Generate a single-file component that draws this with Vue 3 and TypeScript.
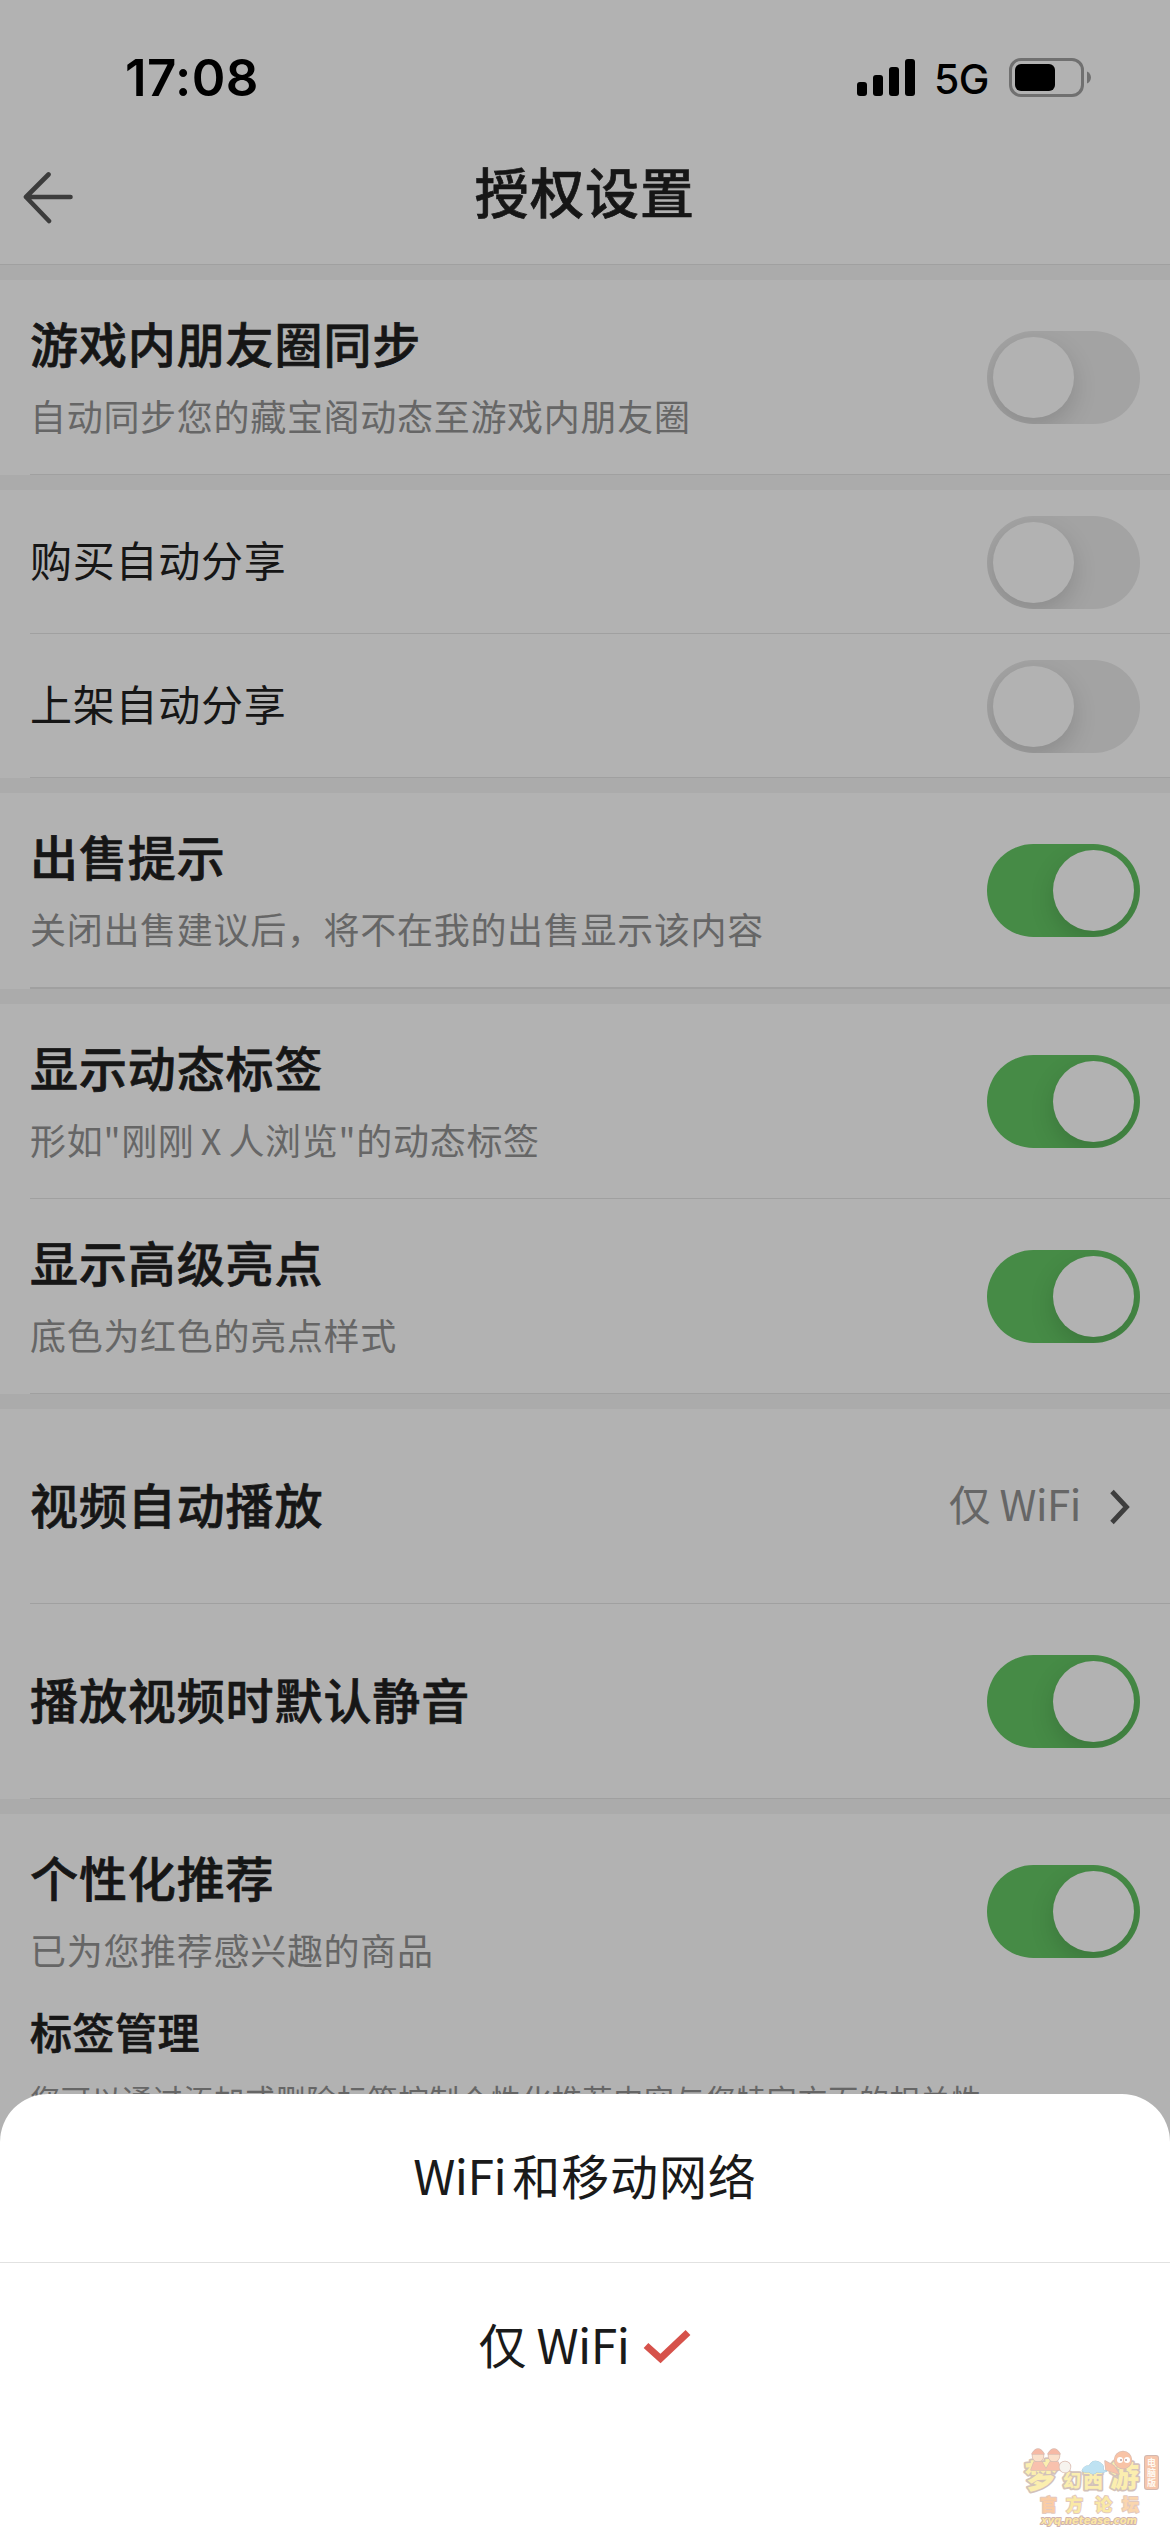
<script setup lang="ts">
interface Row {
  title: string
  sub?: string
  plain?: boolean
  on?: boolean
  value?: string
}

const sections: Row[][] = [
  [{ title: '游戏内朋友圈同步', sub: '自动同步您的藏宝阁动态至游戏内朋友圈', on: false }],
  [
    { title: '购买自动分享', plain: true, on: false },
    { title: '上架自动分享', plain: true, on: false },
  ],
  [{ title: '出售提示', sub: '关闭出售建议后，将不在我的出售显示该内容', on: true }],
  [
    { title: '显示动态标签', sub: '形如"刚刚 X 人浏览"的动态标签', on: true },
    { title: '显示高级亮点', sub: '底色为红色的亮点样式', on: true },
  ],
  [
    { title: '视频自动播放', value: '仅 WiFi' },
    { title: '播放视频时默认静音', on: true },
  ],
  [{ title: '个性化推荐', sub: '已为您推荐感兴趣的商品', on: true }],
]
</script>

<template>
  <div class="screen">
    <div class="status">
      <span class="time">17:08</span>
      <div class="status-right">
        <svg class="signal" width="58" height="38" viewBox="0 0 58 38">
          <rect x="0" y="23" width="10" height="14" rx="3" />
          <rect x="16" y="16" width="10" height="21" rx="3" />
          <rect x="32" y="8" width="10" height="29" rx="3" />
          <rect x="48" y="0" width="10" height="37" rx="3" />
        </svg>
        <span class="net">5G</span>
        <svg class="battery" width="82" height="39" viewBox="0 0 82 39">
          <rect x="1.500" y="1.500" width="72" height="36" rx="10.500" fill="none" stroke="#707070" stroke-width="3" />
          <rect x="6" y="6" width="40" height="27" rx="6" fill="#000" />
          <path d="M78 13.500c5.300 2 5.300 10 0 12z" fill="#707070" />
        </svg>
      </div>
    </div>
    <header class="nav">
      <svg class="back" width="52" height="54" viewBox="0 0 52 54" fill="none" stroke="#3c3c3c" stroke-width="4.600" stroke-linecap="round" stroke-linejoin="round">
        <path d="M25.500 4.500 3 27l23 24M3 27h44.500" />
      </svg>
      <h1>授权设置</h1>
    </header>

    <section v-for="(rows, i) in sections" :key="i" class="group" :class="'g' + i">
      <div v-for="row in rows" :key="row.title" class="row" :class="{ plain: row.plain, single: !row.sub }">
        <div class="texts">
          <div class="title">{{ row.title }}</div>
          <div v-if="row.sub" class="sub">{{ row.sub }}</div>
        </div>
        <div v-if="row.value" class="value">
          <span>{{ row.value }}</span>
          <svg width="22" height="36" viewBox="0 0 22 36" fill="none" stroke="#3e3e3e" stroke-width="4.800">
            <path d="M3 2.500 17.500 18 3 33.500" />
          </svg>
        </div>
        <div v-else class="toggle" :class="{ on: row.on }"><i></i></div>
      </div>
      <div v-if="i === sections.length - 1" class="tags">
        <div class="tags-title">标签管理</div>
        <div class="tags-sub">您可以通过添加或删除标签控制个性化推荐内容与您特定方面的相关性</div>
      </div>
    </section>

    <div class="sheet">
      <div class="option first"><span><b class="latin">WiFi</b>和移动网络</span></div>
      <div class="option">
        <span>仅<b class="latin after">WiFi</b></span>
        <svg width="48" height="36" viewBox="0 0 48 36" fill="none" stroke="#d6524b" stroke-width="7">
          <path d="M3 16.500 17.500 29.500 45 3.500" />
        </svg>
      </div>
      <svg class="mark" width="140" height="84" viewBox="0 0 140 84">
        <g stroke-linejoin="round" paint-order="stroke">
          <g font-family="Noto Sans CJK SC" font-weight="900" fill="#fbeb9c" stroke="#c9b4a8" stroke-width="3.500">
            <text x="5" y="40" font-size="33" transform="rotate(-4 20 30)">梦</text>
            <text x="43" y="39" font-size="18">幻</text>
            <text x="63" y="40" font-size="20">西</text>
            <text x="90" y="39" font-size="29">游</text>
          </g>
          <g stroke="#d3ada0" stroke-width="1.500">
            <circle cx="18" cy="8" r="5.500" fill="#fbd9bd" />
            <circle cx="34" cy="8" r="5.500" fill="#fbd9bd" />
            <path d="M12 6q6-10 12 0zM28 6q6-10 12 0z" fill="#f5a88f" />
            <path d="M11 22l3-8h8l4 7 4-7h8l3 8z" fill="#f7b299" />
            <circle cx="45" cy="19" r="5.500" fill="#f5f1ea" />
            <path d="M85 13l9 5 5 8-13-4z" fill="#f7b494" />
            <circle cx="103" cy="12" r="8.500" fill="#f7b590" />
          </g>
          <circle cx="100" cy="12" r="3" fill="#fff" /><circle cx="107" cy="12" r="3" fill="#fff" />
          <circle cx="101" cy="12" r="1" fill="#a88" /><circle cx="106" cy="12" r="1" fill="#a88" />
          <path d="M62 23q2-6 7-5 3-7 10-4 6 3 4 8l4 1q-4 3-10 1-4 4-8 0-4 1-7-1z" fill="#aedcf0" stroke="#94bdd0" stroke-width="1" />
          <rect x="125" y="8" width="13" height="33" rx="2" fill="#f5b898" stroke="#c9a79c" stroke-width="2" />
          <g font-family="Noto Sans CJK SC" font-weight="700" font-size="9" fill="#fffaf0">
            <text x="127" y="18">电</text>
            <text x="127" y="28">脑</text>
            <text x="127" y="38">版</text>
          </g>
          <g font-family="Noto Sans CJK SC" font-weight="900" font-size="17" stroke="#dcbcae" stroke-width="2">
            <text x="20" y="62.500" fill="#f9c08f">官</text>
            <text x="46" y="62.500" fill="#fae48f">方</text>
            <text x="75" y="62.500" fill="#fae48f">论</text>
            <text x="102" y="62.500" fill="#f9cc9a">坛</text>
          </g>
          <text x="21" y="75.500" textLength="96" lengthAdjust="spacingAndGlyphs" font-family="DejaVu Sans" font-style="italic" font-weight="700" font-size="10" fill="#fbe08e" stroke="#c5a09a" stroke-width="1.800">xyq.netease.com</text>
        </g>
      </svg>
    </div>
  </div>
</template>

<style>
body {
  margin: 0;
}
</style>

<style scoped>
.screen {
  position: relative;
  width: 1170px;
  height: 2532px;
  overflow: hidden;
  background: #b2b2b2;
  color: #161616;
  font-family: "Noto Sans CJK SC", sans-serif;
}
.status {
  height: 140px;
  box-sizing: border-box;
  padding: 48px 79px 0 125px;
  display: flex;
  justify-content: space-between;
  align-items: flex-start;
  color: #000;
  font-family: Inter, sans-serif;
}
.time {
  font-size: 51px;
  font-weight: 600;
  line-height: 60px;
  letter-spacing: 0.4px;
}
.status-right {
  display: flex;
  align-items: flex-start;
}
.signal {
  margin-top: 11px;
}
.net {
  margin: 6px 21px 0 19px;
  width: 54px;
  font-size: 41px;
  font-weight: 500;
  line-height: 50px;
  letter-spacing: -0.5px;
}
.battery {
  margin-top: 10px;
}
.nav {
  height: 125px;
  box-sizing: border-box;
  border-bottom: 1px solid #a0a0a0;
  display: flex;
  padding-left: 23px;
}
.back {
  margin-top: 30px;
}
h1 {
  flex: 1;
  margin: 11px 75px 0 0;
  text-align: center;
  font-size: 54px;
  font-weight: 500;
  line-height: 80px;
  letter-spacing: 1.1px;
  -webkit-text-stroke: 0.7px currentColor;
}
.group {
  border-top: 15px solid #ababab;
}
.row {
  position: relative;
  height: 195px;
  display: flex;
  justify-content: space-between;
  align-items: center;
  padding: 0 30px;
}
.row::after {
  content: "";
  position: absolute;
  left: 30px;
  right: 0;
  bottom: 0;
  height: 1px;
  background: #a0a0a0;
}
.g2 .row {
  padding-bottom: 1px;
}
.g2 .row::after {
  height: 2px;
}
.g5 .row::after {
  display: none;
}
.row.plain {
  height: 144px;
}
.texts {
  align-self: flex-start;
  padding-top: 28px;
}
.title {
  font-size: 48px;
  font-weight: 500;
  line-height: 68px;
  letter-spacing: 0.9px;
  -webkit-text-stroke: 0.7px currentColor;
}
.plain .title {
  font-size: 42px;
  font-weight: 400;
  letter-spacing: 0.75px;
  -webkit-text-stroke: 0;
}
.single .texts {
  align-self: center;
  padding: 0 0 7px;
}
.sub {
  margin-top: 14px;
  font-size: 36px;
  line-height: 50px;
  letter-spacing: 0.7px;
  word-spacing: -2.5px;
  color: #666;
}
.toggle {
  width: 153px;
  height: 93px;
  box-sizing: border-box;
  padding: 6px;
  border-radius: 47px;
  background: #a3a3a3;
  overflow: hidden;
  display: flex;
}
.toggle i {
  width: 81px;
  height: 81px;
  border-radius: 50%;
  background: #b2b2b2;
  box-shadow: 0 9px 24px rgba(0, 0, 0, 0.15);
}
.toggle.on {
  background: #468b46;
  justify-content: flex-end;
}
.value {
  display: flex;
  align-items: center;
  font-size: 42px;
  color: #666;
}
.value span {
  margin-bottom: 7px;
  line-height: 60px;
  letter-spacing: -0.4px;
}
.value svg {
  margin: 0 9px 0 28px;
}
.tags {
  padding: 0 30px;
}
.tags-title {
  font-size: 42px;
  font-weight: 500;
  line-height: 60px;
  letter-spacing: 0.5px;
  margin-top: -8px;
  -webkit-text-stroke: 0.7px currentColor;
}
.tags-sub {
  font-size: 30px;
  line-height: 44px;
  letter-spacing: 0.7px;
  margin-top: 15px;
  color: #666;
  white-space: nowrap;
}
.sheet {
  position: absolute;
  left: 0;
  right: 0;
  top: 2094px;
  bottom: 0;
  background: #fff;
  border-radius: 48px 48px 0 0;
  color: #1a1a1a;
}
.option {
  height: 168px;
  display: flex;
  align-items: center;
  justify-content: center;
  font-size: 48px;
  letter-spacing: 0.9px;
}
.option span {
  line-height: 70px;
  margin-bottom: 9px;
}
.latin {
  font-weight: 400;
  letter-spacing: -0.5px;
  margin-right: 6px;
}
.latin.after {
  margin: 0 0 0 9px;
}
.option.first {
  border-bottom: 1px solid #e2e2e2;
}
.option svg {
  margin-left: 14px;
}
.mark {
  position: absolute;
  right: 10px;
  bottom: 0;
  opacity: 0.8;
}
</style>
